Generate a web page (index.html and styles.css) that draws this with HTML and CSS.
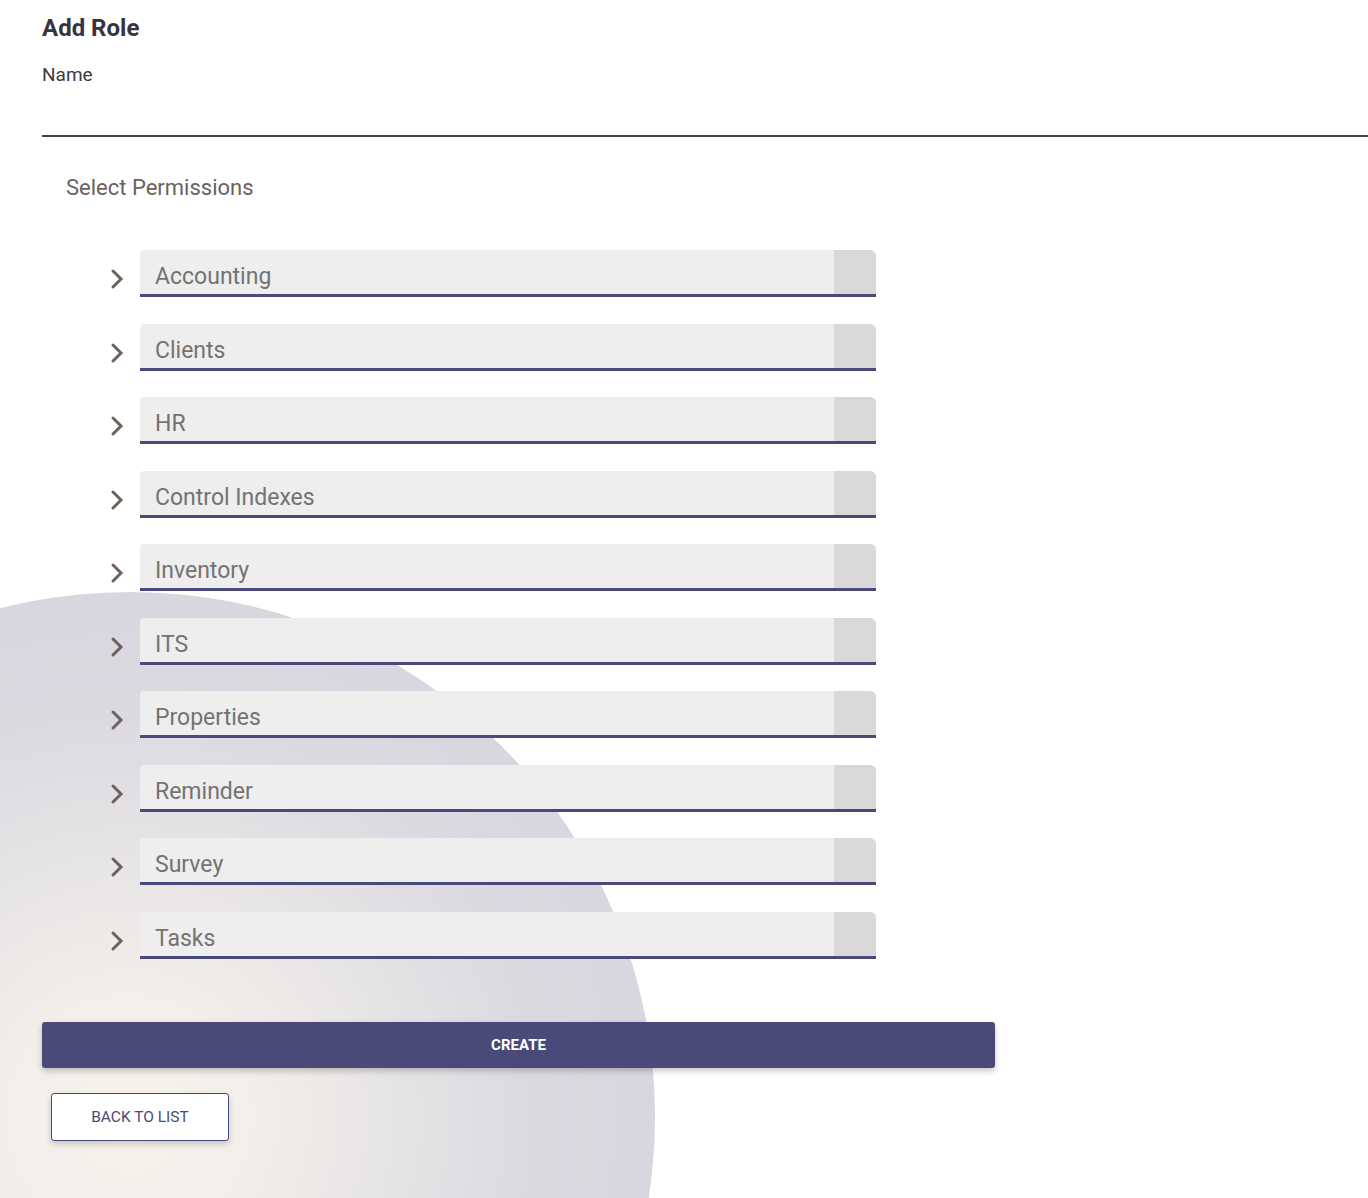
FILE: index.html
```html
<!DOCTYPE html>
<html>
<head>
<meta charset="utf-8">
<link rel="stylesheet" href="styles.css">
</head>
<body>
<div class="blob"></div>
<main class="page">
  <h1 class="title">Add Role</h1>
  <div class="field">
    <label class="field-label">Name</label>
    <div class="field-input"></div>
  </div>
  <div class="perm-title">Select Permissions</div>
  <ul class="perms">
    <li class="perm"><svg class="chev" viewBox="0 0 16 22"><polyline points="4,3 12,11 4,19"/></svg><div class="perm-box"><span class="perm-name">Accounting</span><span class="perm-side"></span></div></li>
    <li class="perm"><svg class="chev" viewBox="0 0 16 22"><polyline points="4,3 12,11 4,19"/></svg><div class="perm-box"><span class="perm-name">Clients</span><span class="perm-side"></span></div></li>
    <li class="perm"><svg class="chev" viewBox="0 0 16 22"><polyline points="4,3 12,11 4,19"/></svg><div class="perm-box"><span class="perm-name">HR</span><span class="perm-side"></span></div></li>
    <li class="perm"><svg class="chev" viewBox="0 0 16 22"><polyline points="4,3 12,11 4,19"/></svg><div class="perm-box"><span class="perm-name">Control Indexes</span><span class="perm-side"></span></div></li>
    <li class="perm"><svg class="chev" viewBox="0 0 16 22"><polyline points="4,3 12,11 4,19"/></svg><div class="perm-box"><span class="perm-name">Inventory</span><span class="perm-side"></span></div></li>
    <li class="perm"><svg class="chev" viewBox="0 0 16 22"><polyline points="4,3 12,11 4,19"/></svg><div class="perm-box"><span class="perm-name">ITS</span><span class="perm-side"></span></div></li>
    <li class="perm"><svg class="chev" viewBox="0 0 16 22"><polyline points="4,3 12,11 4,19"/></svg><div class="perm-box"><span class="perm-name">Properties</span><span class="perm-side"></span></div></li>
    <li class="perm"><svg class="chev" viewBox="0 0 16 22"><polyline points="4,3 12,11 4,19"/></svg><div class="perm-box"><span class="perm-name">Reminder</span><span class="perm-side"></span></div></li>
    <li class="perm"><svg class="chev" viewBox="0 0 16 22"><polyline points="4,3 12,11 4,19"/></svg><div class="perm-box"><span class="perm-name">Survey</span><span class="perm-side"></span></div></li>
    <li class="perm"><svg class="chev" viewBox="0 0 16 22"><polyline points="4,3 12,11 4,19"/></svg><div class="perm-box"><span class="perm-name">Tasks</span><span class="perm-side"></span></div></li>
  </ul>
  <button class="btn-create">CREATE</button>
  <button class="btn-back">BACK TO LIST</button>
</main>
</body>
</html>
```
FILE: styles.css
```css
html, body {
  margin: 0;
  padding: 0;
}
body {
  width: 1368px;
  height: 1198px;
  overflow: hidden;
  position: relative;
  background: #ffffff;
  font-family: Roboto, "Liberation Sans", sans-serif;
}
.blob {
  position: absolute;
  left: -395px;
  top: 592px;
  width: 1050px;
  height: 1050px;
  border-radius: 50%;
  background: radial-gradient(circle at 50% 50%, #f6f1eb 0px, #f3efea 110px, #e8e5e6 250px, #dcdae1 400px, #d8d6de 525px);
}
.page {
  position: relative;
  padding: 12px 0 0 42px;
}
.title {
  margin: 0;
  font-size: 24px;
  font-weight: 700;
  color: #353440;
  line-height: 32px;
}
.field {
  margin-top: 19px;
}
.field-label {
  display: block;
  font-size: 19px;
  color: #3c3b45;
  line-height: 24px;
}
.field-input {
  height: 48px;
  border-bottom: 2px solid #44434c;
}
.perm-title {
  margin: 37px 0 0 24px;
  font-size: 22px;
  color: #6a625f;
  line-height: 28px;
}
.perms {
  list-style: none;
  margin: 0;
  padding: 0;
  margin-top: 48px;
  display: flex;
  flex-direction: column;
  gap: 26.5px;
}
.perm {
  display: flex;
  align-items: flex-start;
  height: 47px;
}
.chev {
  width: 16px;
  height: 22px;
  fill: none;
  stroke: #6e615b;
  stroke-width: 3;
  stroke-linecap: round;
  stroke-linejoin: miter;
  margin: 18px 0 0 67px;
  flex: none;
}
.perm-box {
  margin-left: 15px;
  width: 736px;
  height: 44px;
  border-bottom: 3px solid #4a4a7a;
  background: #eeeeee;
  border-radius: 4px 6px 0 0;
  display: flex;
  overflow: hidden;
}
.perm-name {
  flex: 1;
  padding: 13px 0 0 15px;
  font-size: 23px;
  line-height: 28px;
  color: #737373;
}
.perm-side {
  width: 42px;
  background: #d9d9d9;
}
.btn-create {
  display: block;
  margin-top: 63px;
  width: 953px;
  height: 46px;
  border: none;
  border-radius: 3px;
  background: #4a4a7a;
  color: #ffffff;
  font-family: Roboto, "Liberation Sans", sans-serif;
  font-weight: 700;
  font-size: 15px;
  box-shadow: 0 3px 6px rgba(0,0,0,0.22);
  padding: 0;
}
.btn-back {
  display: block;
  margin: 25px 0 0 9px;
  width: 178px;
  height: 48px;
  border: 1px solid #4a4a7a;
  border-radius: 3px;
  background: #ffffff;
  color: #4a4a7a;
  font-family: Roboto, "Liberation Sans", sans-serif;
  font-size: 15.5px;
  box-shadow: 0 3px 6px rgba(0,0,0,0.18);
  padding: 0;
}
```
